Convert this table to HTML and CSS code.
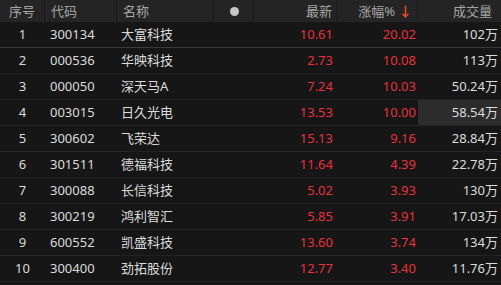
FILE: index.html
```html
<!DOCTYPE html>
<html lang="zh">
<head>
<meta charset="utf-8">
<link rel="stylesheet" href="styles.css">
</head>
<body>
<div class="table">
  <div class="row head">
    <div class="c c-idx center">序号</div>
    <div class="c c-code">代码</div>
    <div class="c c-name">名称</div>
    <div class="c c-dot center"><span class="dot"></span></div>
    <div class="c c-price right">最新</div>
    <div class="c c-pct right pct-head">涨幅%<svg class="arrow" width="7" height="13" viewBox="0 0 7 13"><path d="M3.5 0.5V12M0.6 8.6L3.5 12L6.4 8.6" fill="none" stroke="#f04a28" stroke-width="1.4"/></svg></div>
    <div class="c c-vol right vol-head">成交量</div>
  </div>

  <div class="row first">
    <div class="c c-idx center">1</div><div class="c c-code">300134</div><div class="c c-name">大富科技</div><div class="c c-dot"></div>
    <div class="c c-price right red">10.61</div><div class="c c-pct right red">20.02</div><div class="c c-vol right">102万</div>
  </div>
  <div class="row">
    <div class="c c-idx center">2</div><div class="c c-code">000536</div><div class="c c-name">华映科技</div><div class="c c-dot"></div>
    <div class="c c-price right red">2.73</div><div class="c c-pct right red">10.08</div><div class="c c-vol right">113万</div>
  </div>
  <div class="row">
    <div class="c c-idx center">3</div><div class="c c-code">000050</div><div class="c c-name">深天马A</div><div class="c c-dot"></div>
    <div class="c c-price right red">7.24</div><div class="c c-pct right red">10.03</div><div class="c c-vol right">50.24万</div>
  </div>
  <div class="row">
    <div class="c c-idx center">4</div><div class="c c-code">003015</div><div class="c c-name">日久光电</div><div class="c c-dot"></div>
    <div class="c c-price right red">13.53</div><div class="c c-pct right red">10.00</div><div class="c c-vol right hl">58.54万</div>
  </div>
  <div class="row">
    <div class="c c-idx center">5</div><div class="c c-code">300602</div><div class="c c-name">飞荣达</div><div class="c c-dot"></div>
    <div class="c c-price right red">15.13</div><div class="c c-pct right red">9.16</div><div class="c c-vol right">28.84万</div>
  </div>
  <div class="row">
    <div class="c c-idx center">6</div><div class="c c-code">301511</div><div class="c c-name">德福科技</div><div class="c c-dot"></div>
    <div class="c c-price right red">11.64</div><div class="c c-pct right red">4.39</div><div class="c c-vol right">22.78万</div>
  </div>
  <div class="row">
    <div class="c c-idx center">7</div><div class="c c-code">300088</div><div class="c c-name">长信科技</div><div class="c c-dot"></div>
    <div class="c c-price right red">5.02</div><div class="c c-pct right red">3.93</div><div class="c c-vol right">130万</div>
  </div>
  <div class="row">
    <div class="c c-idx center">8</div><div class="c c-code">300219</div><div class="c c-name">鸿利智汇</div><div class="c c-dot"></div>
    <div class="c c-price right red">5.85</div><div class="c c-pct right red">3.91</div><div class="c c-vol right">17.03万</div>
  </div>
  <div class="row">
    <div class="c c-idx center">9</div><div class="c c-code">600552</div><div class="c c-name">凯盛科技</div><div class="c c-dot"></div>
    <div class="c c-price right red">13.60</div><div class="c c-pct right red">3.74</div><div class="c c-vol right">134万</div>
  </div>
  <div class="row">
    <div class="c c-idx center">10</div><div class="c c-code">300400</div><div class="c c-name">劲拓股份</div><div class="c c-dot"></div>
    <div class="c c-price right red">12.77</div><div class="c c-pct right red">3.40</div><div class="c c-vol right">11.76万</div>
  </div>
</div>
</body>
</html>
```

FILE: styles.css
```css
html, body {
  margin: 0;
  padding: 0;
  background: #161616;
}
body {
  width: 501px;
  height: 285px;
  overflow: hidden;
  font-family: "Noto Sans", "Noto Sans CJK SC", sans-serif;
  font-size: 13px;
  color: #dcdcdc;
}
.table {
  display: flex;
  flex-direction: column;
}
.row {
  display: grid;
  grid-template-columns: 45px 72px 97px 40px 83px 81px 83px;
  height: 26px;
  border-bottom: 1px solid #232323;
  box-sizing: border-box;
}
.row.first {
  border-bottom-color: #3a3a3a;
}
.row.head {
  height: 22px;
  background: #242424;
  border-bottom: none;
  color: #a6a6a6;
}
.head .c {
  border-right: 1px solid #1a1a1a;
}
.head .c:last-child {
  border-right: none;
}
.c {
  display: flex;
  align-items: center;
  white-space: nowrap;
  line-height: 1;
  box-sizing: border-box;
}
.c-code { padding-left: 5px; }
.c-name { padding-left: 4px; }
.head .c-code { padding-left: 6px; }
.head .c-name { padding-left: 6px; }
.center { justify-content: center; }
.right { justify-content: flex-end; }
.c-price { padding-right: 4px; }
.c-pct { padding-right: 2px; }
.c-vol { padding-right: 3px; }
.head .c-price { padding-right: 4px; }
.pct-head { padding-right: 8px; }
.vol-head { padding-right: 9px; }
.arrow {
  margin-left: 7px;
  display: block;
}
.dot {
  width: 9px;
  height: 9px;
  border-radius: 50%;
  background: #c4c4c4;
  display: block;
  margin-left: 2px;
}
.red { color: #e8313c; }
.hl { background: #2c2c2c; }
```
